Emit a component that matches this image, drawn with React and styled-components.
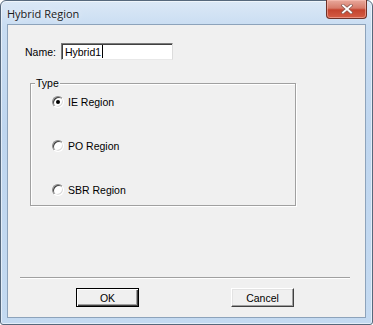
import React from 'react';
import styled, { createGlobalStyle } from 'styled-components';

const Global = createGlobalStyle`
    html, body {
        margin: 0;
        padding: 0;
        background: #ffffff;
    }
    body {
        font-family: 'Liberation Sans', Arial, sans-serif;
    }
`;

const options = [
    { id: 'ie', label: 'IE Region', checked: true },
    { id: 'po', label: 'PO Region', checked: false },
    { id: 'sbr', label: 'SBR Region', checked: false }
];

const App = () => {
    return (
        <>
            <Global />
            <Window>
                <TitleBar>
                    <Title>Hybrid Region</Title>
                    <CloseButton>
                        <svg width="12" height="10" viewBox="0 0 12 10">
                            <path d="M2 1.5 L10 8.5 M10 1.5 L2 8.5" stroke="#8c5a52" strokeWidth="3.4" strokeLinecap="square" />
                            <path d="M2 1.5 L10 8.5 M10 1.5 L2 8.5" stroke="#ffffff" strokeWidth="1.8" strokeLinecap="square" />
                        </svg>
                    </CloseButton>
                </TitleBar>
                <Client>
                    <NameRow>
                        <Label>Name:</Label>
                        <TextBox>
                            Hybrid1<Caret />
                        </TextBox>
                    </NameRow>

                    <GroupBox>
                        <Legend>Type</Legend>
                        <RadioList>
                            {options.map(item => (
                                <RadioRow key={item.id}>
                                    <RadioCircle checked={item.checked} />
                                    <span>{item.label}</span>
                                </RadioRow>
                            ))}
                        </RadioList>
                    </GroupBox>

                    <Separator />

                    <ButtonRow>
                        <PushButton $default>OK</PushButton>
                        <PushButton>Cancel</PushButton>
                    </ButtonRow>
                </Client>
            </Window>
        </>
    );
};

export default App;

const Window = styled.div`
    width: 373px;
    height: 325px;
    box-sizing: border-box;
    border: 1px solid #56687c;
    border-radius: 6px 6px 3px 3px;
    background: linear-gradient(180deg, #dbe8f6 0%, #c9ddf2 8%, #bfd6ef 40%, #c4daf1 100%);
    display: flex;
    flex-direction: column;
    box-shadow: inset 0 0 0 1px rgba(255, 255, 255, 0.55);
`;

const TitleBar = styled.div`
    height: 23px;
    display: flex;
    align-items: flex-start;
    justify-content: space-between;
    padding: 0 5px 0 6px;
`;

const Title = styled.div`
    font-family: 'Open Sans', 'Noto Sans', sans-serif;
    font-size: 11px;
    color: #1a1a1a;
    line-height: 14px;
    margin-top: 6px;
    text-shadow: 0 0 6px rgba(255, 255, 255, 0.9);
`;

const CloseButton = styled.div`
    width: 41px;
    height: 19px;
    margin-top: -1px;
    box-sizing: border-box;
    border: 1px solid #6e3128;
    border-top: none;
    border-radius: 0 0 4px 4px;
    background: linear-gradient(180deg, #e8a99c 0%, #d77b6a 45%, #c4432e 55%, #d45d45 100%);
    box-shadow: inset 0 0 0 1px rgba(255, 200, 190, 0.5);
    display: flex;
    align-items: center;
    justify-content: center;
`;

const Client = styled.div`
    flex: 1;
    margin: 0 6px 6px 6px;
    border: 1px solid #8da3bb;
    background: #f0f0f0;
    display: flex;
    flex-direction: column;
    padding: 18px 0 0 0;
    font-size: 10.5px;
    color: #000000;
`;

const NameRow = styled.div`
    display: flex;
    align-items: center;
    gap: 5px;
    padding-left: 17px;
    height: 17px;
`;

const Label = styled.span`
    font-size: 10.5px;
`;

const TextBox = styled.div`
    width: 112px;
    height: 17px;
    box-sizing: border-box;
    background: #ffffff;
    border-top: 1px solid #7a7a7a;
    border-left: 1px solid #7a7a7a;
    border-right: 1px solid #dcdcdc;
    border-bottom: 1px solid #e8e8e8;
    box-shadow: inset 1px 1px 0 #404040;
    padding: 1px 0 0 3px;
    font-size: 10.5px;
    line-height: 14px;
    display: flex;
    align-items: flex-start;
`;

const Caret = styled.span`
    display: inline-block;
    width: 1px;
    height: 13px;
    margin-left: 1px;
    background: #000000;
`;

const GroupBox = styled.div`
    position: relative;
    margin: 23px 0 0 22px;
    width: 266px;
    height: 123px;
    box-sizing: border-box;
    border: 1px solid #a0a0a0;
    box-shadow: 1px 1px 0 #ffffff, inset 1px 1px 0 #ffffff;
`;

const Legend = styled.span`
    position: absolute;
    top: -7px;
    left: 4px;
    padding: 0 1px;
    background: #f0f0f0;
    font-size: 10.5px;
    line-height: 13px;
`;

const RadioList = styled.div`
    display: flex;
    flex-direction: column;
    gap: 31px;
    padding: 11px 0 0 21px;
`;

const RadioRow = styled.div`
    display: flex;
    align-items: center;
    gap: 4px;
    height: 13px;
    font-size: 10.5px;
`;

const RadioCircle = styled.span`
    width: 12px;
    height: 12px;
    box-sizing: border-box;
    border-radius: 50%;
    border: 1px solid;
    border-color: #8a8a8a #ffffff #ffffff #8a8a8a;
    background: #ffffff;
    box-shadow: inset 1px 1px 0 #404040, inset -1px -1px 0 #dcdcdc;
    position: relative;

    &::after {
        content: '';
        display: ${p => (p.checked ? 'block' : 'none')};
        position: absolute;
        left: 3px;
        top: 3px;
        width: 4px;
        height: 4px;
        border-radius: 50%;
        background: #000000;
    }
`;

const Separator = styled.div`
    margin: 71px 0 0 12px;
    width: 330px;
    height: 1px;
    background: #a0a0a0;
    border-bottom: 1px solid #ffffff;
`;

const ButtonRow = styled.div`
    display: flex;
    gap: 92px;
    padding-left: 68px;
    margin-top: 9px;
`;

const PushButton = styled.div`
    width: 63px;
    height: 19px;
    box-sizing: border-box;
    background: #f0f0f0;
    border: 1px solid;
    border-color: ${p => (p.$default ? '#000000' : '#ffffff #404040 #404040 #ffffff')};
    box-shadow: ${p => (p.$default
        ? 'inset 1px 1px 0 #ffffff, inset -1px -1px 0 #404040, inset -2px -2px 0 #a0a0a0'
        : 'inset -1px -1px 0 #a0a0a0, inset 1px 1px 0 #e3e3e3')};
    display: flex;
    align-items: center;
    justify-content: center;
    font-size: 10.5px;
`;
